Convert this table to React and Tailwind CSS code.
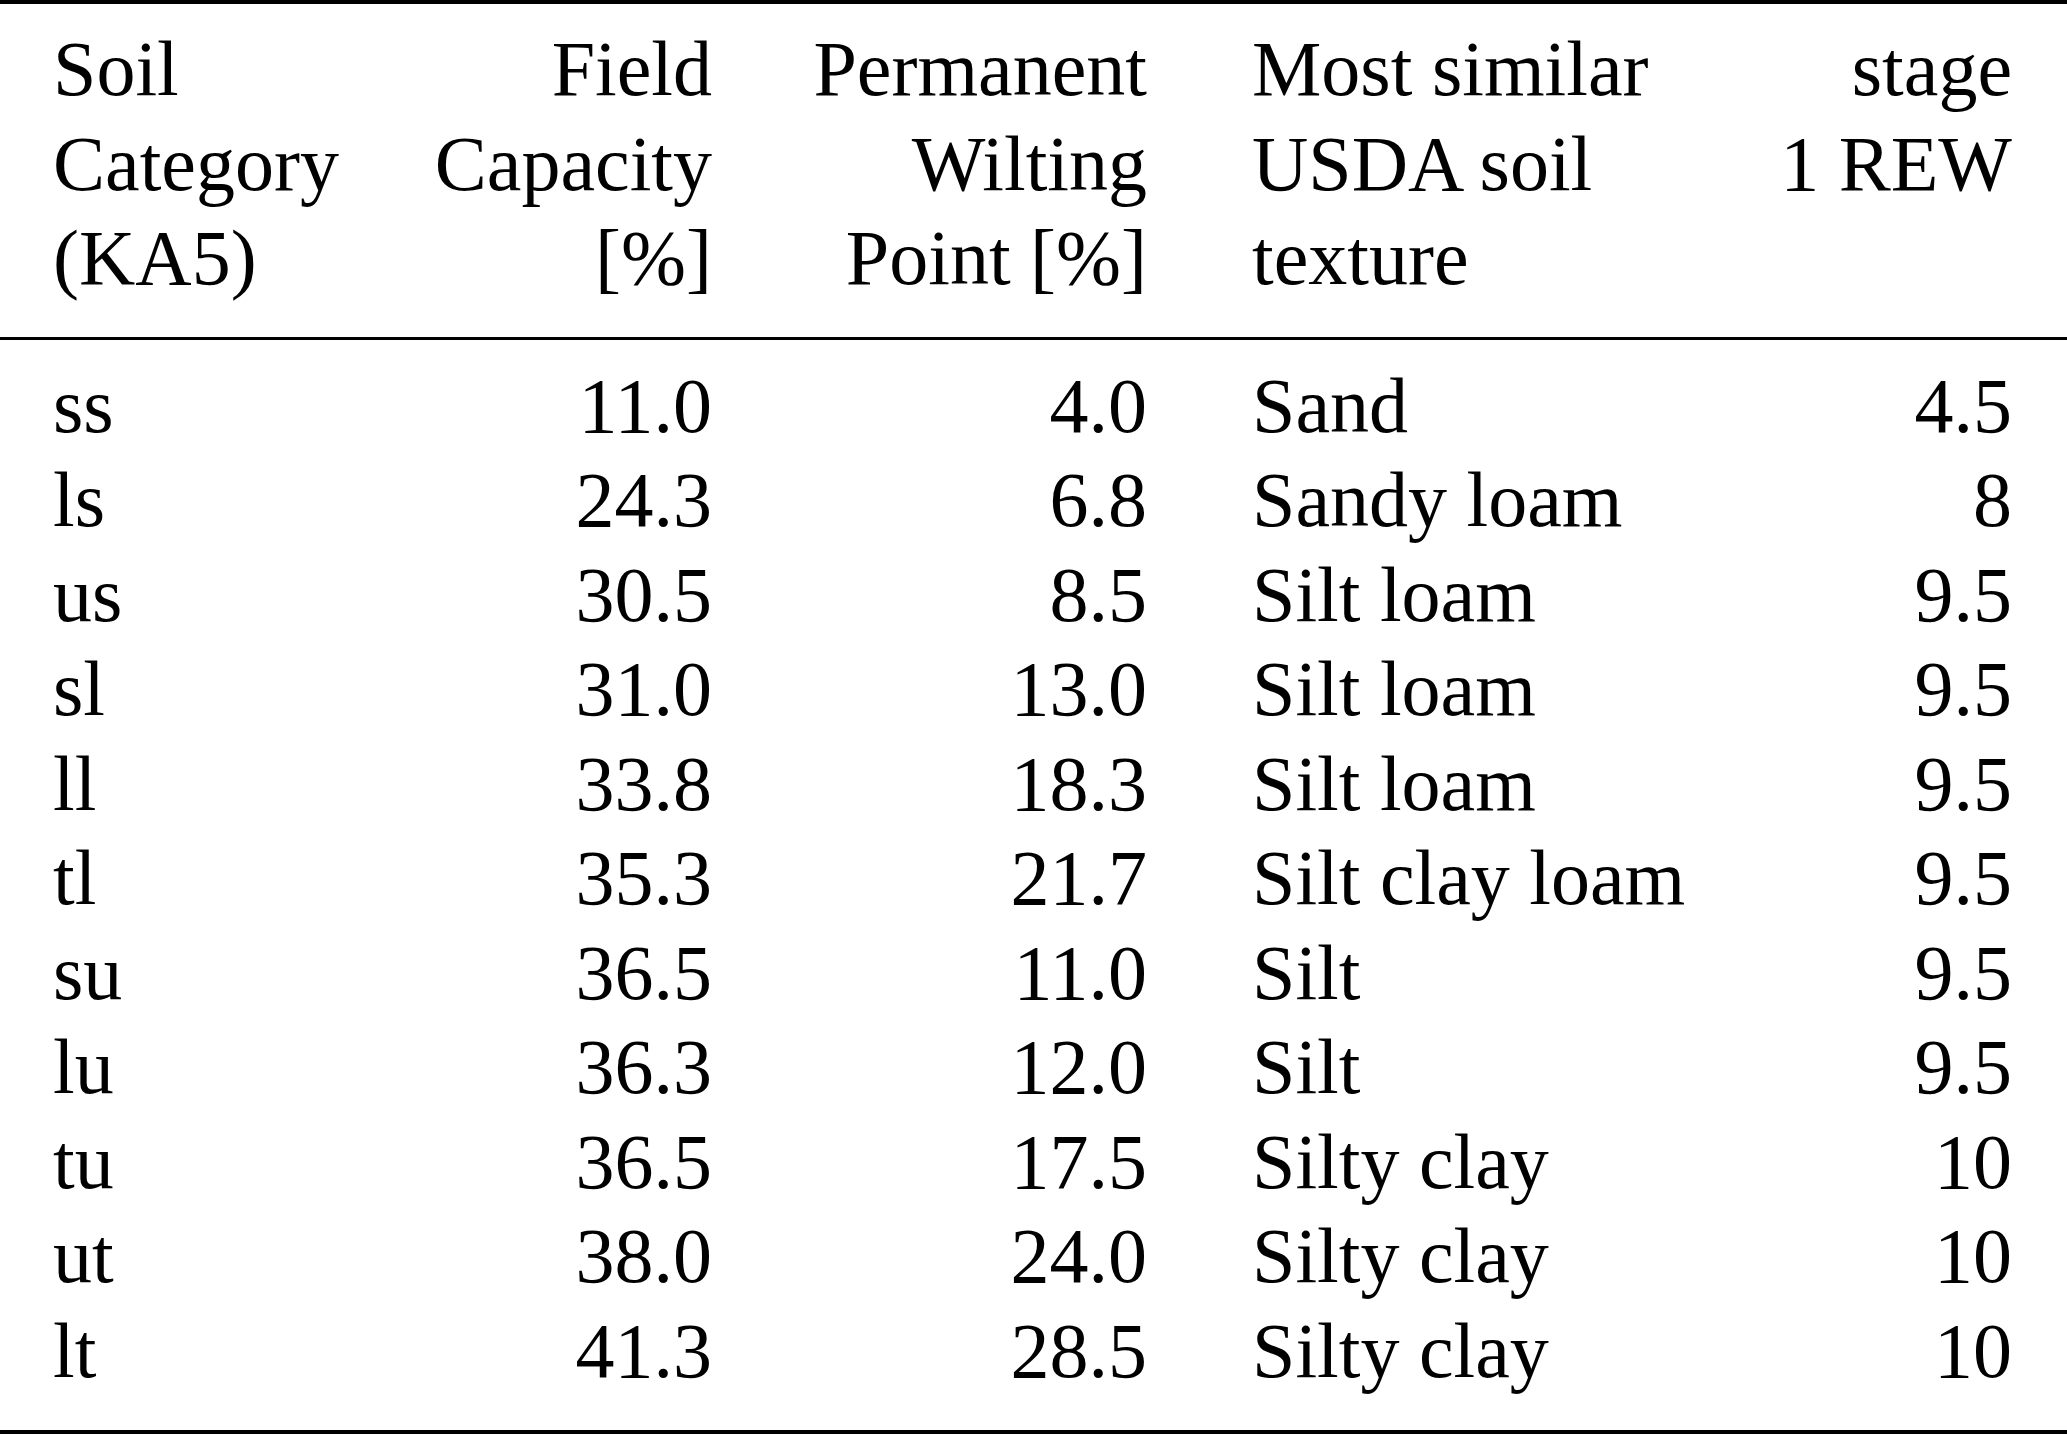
import React from 'react';

const rows = [
  ['ss', '11.0', '4.0', 'Sand', '4.5'],
  ['ls', '24.3', '6.8', 'Sandy loam', '8'],
  ['us', '30.5', '8.5', 'Silt loam', '9.5'],
  ['sl', '31.0', '13.0', 'Silt loam', '9.5'],
  ['ll', '33.8', '18.3', 'Silt loam', '9.5'],
  ['tl', '35.3', '21.7', 'Silt clay loam', '9.5'],
  ['su', '36.5', '11.0', 'Silt', '9.5'],
  ['lu', '36.3', '12.0', 'Silt', '9.5'],
  ['tu', '36.5', '17.5', 'Silty clay', '10'],
  ['ut', '38.0', '24.0', 'Silty clay', '10'],
  ['lt', '41.3', '28.5', 'Silty clay', '10']
];

const gridCols = 'grid grid-cols-[300px_359px_435px_1fr_auto] pl-[53px] pr-[55px]';

const App = () => {
  return (
    <div className="w-[2067px] h-[1435px] bg-white text-black font-['Liberation_Serif','Times_New_Roman',serif] text-[78px] leading-[94.5px] whitespace-nowrap">
      {/* Header */}
      <div className={`${gridCols} border-t-[4px] border-b-[3px] border-black pt-[18px] pb-[31px]`}>
        <div className="text-left">
          Soil
          <br />
          Category
          <br />
          (KA5)
        </div>
        <div className="text-right">
          Field
          <br />
          Capacity
          <br />
          [%]
        </div>
        <div className="text-right">
          Permanent
          <br />
          Wilting
          <br />
          Point [%]
        </div>
        <div className="text-left pl-[105px]">
          Most similar
          <br />
          USDA soil
          <br />
          texture
        </div>
        <div className="text-right">
          stage
          <br />1 REW
        </div>
      </div>

      {/* Body */}
      <div className="border-b-[4px] border-black pt-[19px] pb-[32px]">
        {rows.map(([cat, fc, pwp, usda, rew], idx) => (
          <div key={idx} className={gridCols}>
            <div className="text-left">{cat}</div>
            <div className="text-right">{fc}</div>
            <div className="text-right">{pwp}</div>
            <div className="text-left pl-[105px]">{usda}</div>
            <div className="text-right">{rew}</div>
          </div>
        ))}
      </div>
    </div>
  );
};

export default App;
